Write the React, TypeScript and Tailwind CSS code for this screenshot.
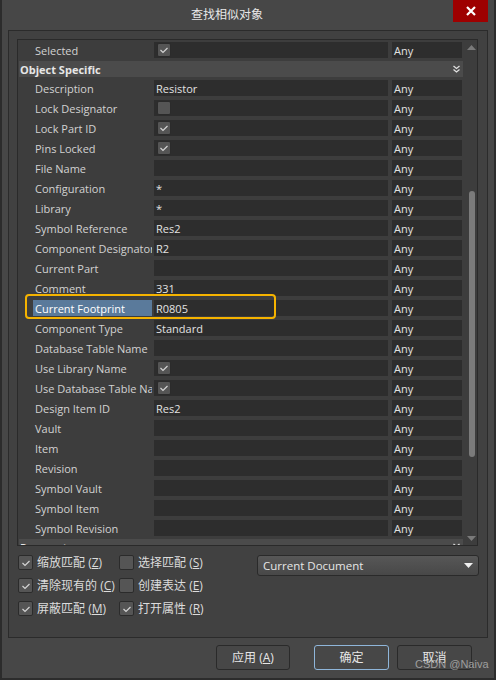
import React from "react";

type Kind = "text" | "check" | "uncheck" | "empty";

const rows: { label: string; kind: Kind; value?: string }[] = [
  { label: "Description", kind: "text", value: "Resistor" },
  { label: "Lock Designator", kind: "uncheck" },
  { label: "Lock Part ID", kind: "check" },
  { label: "Pins Locked", kind: "check" },
  { label: "File Name", kind: "empty" },
  { label: "Configuration", kind: "text", value: "*" },
  { label: "Library", kind: "text", value: "*" },
  { label: "Symbol Reference", kind: "text", value: "Res2" },
  { label: "Component Designator", kind: "text", value: "R2" },
  { label: "Current Part", kind: "empty" },
  { label: "Comment", kind: "text", value: "331" },
  { label: "Current Footprint", kind: "text", value: "R0805" },
  { label: "Component Type", kind: "text", value: "Standard" },
  { label: "Database Table Name", kind: "empty" },
  { label: "Use Library Name", kind: "check" },
  { label: "Use Database Table Name", kind: "check" },
  { label: "Design Item ID", kind: "text", value: "Res2" },
  { label: "Vault", kind: "empty" },
  { label: "Item", kind: "empty" },
  { label: "Revision", kind: "empty" },
  { label: "Symbol Vault", kind: "empty" },
  { label: "Symbol Item", kind: "empty" },
  { label: "Symbol Revision", kind: "empty" },
];

function Check({ on, big }: { on: boolean; big?: boolean }) {
  return (
    <span
      className={`flex items-center justify-center rounded-[2px] border border-[#2b2b2b] bg-[#555555] ${
        big ? "w-[15px] h-[15px]" : "w-[14px] h-[14px]"
      }`}
    >
      {on && (
        <svg width="10" height="10" viewBox="0 0 10 10">
          <polyline points="1.5,5 4,7.5 8.5,3" fill="none" stroke="#d4d4d4" strokeWidth="1.2" />
        </svg>
      )}
    </span>
  );
}

function Row({ label, kind, value }: { label: string; kind: Kind; value?: string }) {
  const hl = label === "Current Footprint";
  return (
    <div className="flex h-[20px] items-center">
      <div className="w-[136px] h-[20px] flex items-center pl-[15px] overflow-hidden">
        <span
          className={`h-[16px] flex items-center pl-[2px] w-[119px] whitespace-nowrap overflow-hidden ${
            hl ? "bg-[#5a7a9b] text-white" : "text-[#d2d2d2]"
          }`}
        >
          {label}
        </span>
      </div>
      <div className="w-[234px] h-[16px] bg-[#2d2d2d] flex items-center">
        {kind === "text" && <span className="pl-[2px] text-[#e2e2e2]">{value}</span>}
        {kind === "check" && <span className="ml-[3px]"><Check on /></span>}
        {kind === "uncheck" && <span className="ml-[3px]"><Check on={false} /></span>}
      </div>
      <div className="ml-[4px] w-[70px] h-[16px] bg-[#2d2d2d] flex items-center pl-[2px] text-[#e2e2e2]">
        Any
      </div>
    </div>
  );
}

function Chevron() {
  return (
    <svg width="7" height="8" viewBox="0 0 7 8">
      <polyline points="0.5,1 3.5,3.5 6.5,1" fill="none" stroke="#e0e0e0" strokeWidth="1.3" />
      <polyline points="0.5,4.5 3.5,7 6.5,4.5" fill="none" stroke="#e0e0e0" strokeWidth="1.3" />
    </svg>
  );
}

function Group({ title }: { title: string }) {
  return (
    <div className="h-[18px] flex items-center pl-[1px]">
      <div className="w-[444px] h-[16px] bg-[#4b4b4b] flex items-center justify-between pl-[1px] pr-[3px]">
        <span className="font-bold text-[#e6e6e6]">{title}</span>
        <Chevron />
      </div>
    </div>
  );
}

function Opt({ on, text, k }: { on: boolean; text: string; k: string }) {
  return (
    <div className="flex items-center h-[15px] gap-[4px]">
      <Check on={on} big />
      <span className="text-[#dcdcdc] whitespace-nowrap text-[12px]">
        {text} (<span className="underline">{k}</span>)
      </span>
    </div>
  );
}

export default function App() {
  return (
    <div
      className="relative w-[496px] h-[680px] bg-[#474747] border-x-2 border-b-2 border-[#2c2c2c] text-[11px] leading-none overflow-hidden"
      style={{ fontFamily: '"Open Sans", "Noto Sans CJK SC", sans-serif' }}
    >
      {/* title */}
      <div className="h-[30px] flex items-center justify-center pr-[42px] text-[#e8e8e8] text-[12px]">查找相似对象</div>
      <div className="absolute right-[6px] top-0 w-[35px] h-[22px] bg-[#9e0000] flex items-center justify-center">
        <svg width="10" height="10" viewBox="0 0 10 10">
          <path d="M1 1 L9 9 M9 1 L1 9" stroke="white" strokeWidth="2.2" />
        </svg>
      </div>

      {/* main panel */}
      <div className="mx-[6px] h-[608px] border border-[#2b2b2b] bg-[#414141] pt-[8px] px-[8px]">
        <div className="relative w-[461px] h-[507px] border border-[#2a2a2a] bg-[#3d3d3d] flex overflow-hidden">
          <div className="w-[448px]">
            <Row label="Selected" kind="check" />
            <Group title="Object Specific" />
            {rows.map((r) => (
              <Row key={r.label} {...r} />
            ))}
            <Group title="Parameters" />
          </div>
          {/* scrollbar */}
          <div className="flex-1 flex flex-col items-center pt-[5px]">
            <svg width="9" height="5" viewBox="0 0 9 5">
              <polygon points="0,5 4.5,0 9,5" fill="#7a7a7a" />
            </svg>
            <div className="mt-[141px] w-[6px] h-[266px] rounded-[3px] bg-[#7b7b7b]" />
            <div className="mt-[79px]">
              <svg width="9" height="5" viewBox="0 0 9 5">
                <polygon points="0,0 4.5,5 9,0" fill="#7a7a7a" />
              </svg>
            </div>
          </div>
          {/* highlight frame */}
          <div className="absolute left-[7px] top-[254px] w-[251px] h-[25px] rounded-[4px] border-2 border-[#f5b300]" />
        </div>

        {/* options */}
        <div className="flex mt-[9px] pl-[1px]">
          <div className="w-[101px] flex flex-col gap-[8px]">
            <Opt on text="缩放匹配" k="Z" />
            <Opt on text="清除现有的" k="C" />
            <Opt on text="屏蔽匹配" k="M" />
          </div>
          <div className="w-[138px] flex flex-col gap-[8px]">
            <Opt on={false} text="选择匹配" k="S" />
            <Opt on={false} text="创建表达" k="E" />
            <Opt on text="打开属性" k="R" />
          </div>
          <div className="w-[222px] h-[21px] rounded-[3px] border border-[#2a2a2a] bg-gradient-to-b from-[#575757] to-[#484848] flex items-center justify-between pl-[5px] pr-[5px] text-[#e6e6e6] text-[11.5px]">
            <span>Current Document</span>
            <svg width="9" height="5" viewBox="0 0 9 5">
              <polygon points="0,0 4.5,5 9,0" fill="#f0f0f0" />
            </svg>
          </div>
        </div>
      </div>

      {/* buttons */}
      <div className="flex justify-end gap-[8px] pr-[22px] mt-[7px] text-[12px]">
        <button className="w-[74px] h-[25px] rounded-[3px] border border-[#2a2a2a] bg-[#474747] text-[#e6e6e6]">
          应用 (<span className="underline">A</span>)
        </button>
        <button className="ml-[16px] w-[75px] h-[25px] rounded-[3px] border border-[#8fb6da] bg-[#474747] text-[#e6e6e6]">
          确定
        </button>
        <button className="w-[75px] h-[25px] rounded-[3px] border border-[#2a2a2a] bg-[#474747] text-[#e6e6e6]">
          取消
        </button>
      </div>
      <div
        className="absolute left-[413px] top-[659px] text-[11px] whitespace-nowrap text-[#b4b4b4] opacity-80"
        style={{ fontFamily: '"Liberation Sans", sans-serif' }}
      >
        CSDN @Naiva
      </div>
    </div>
  );
}
